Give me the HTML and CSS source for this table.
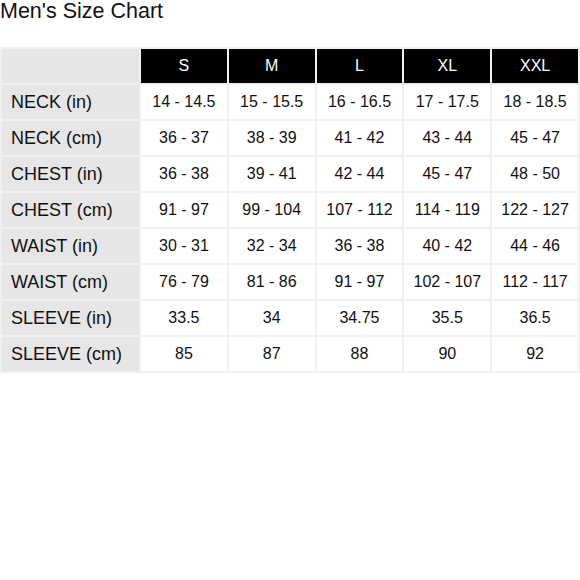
FILE: index.html
```html
<!DOCTYPE html>
<html>
<head>
<meta charset="utf-8">
<link rel="stylesheet" href="styles.css">
</head>
<body>
<h1 class="title">Men's Size Chart</h1>
<table class="chart">
  <thead>
    <tr><th class="corner"></th><th>S</th><th>M</th><th>L</th><th>XL</th><th>XXL</th></tr>
  </thead>
  <tbody>
    <tr><td class="label">NECK (in)</td><td>14 - 14.5</td><td>15 - 15.5</td><td>16 - 16.5</td><td>17 - 17.5</td><td>18 - 18.5</td></tr>
    <tr><td class="label">NECK (cm)</td><td>36 - 37</td><td>38 - 39</td><td>41 - 42</td><td>43 - 44</td><td>45 - 47</td></tr>
    <tr><td class="label">CHEST (in)</td><td>36 - 38</td><td>39 - 41</td><td>42 - 44</td><td>45 - 47</td><td>48 - 50</td></tr>
    <tr><td class="label">CHEST (cm)</td><td>91 - 97</td><td>99 - 104</td><td>107 - 112</td><td>114 - 119</td><td>122 - 127</td></tr>
    <tr><td class="label">WAIST (in)</td><td>30 - 31</td><td>32 - 34</td><td>36 - 38</td><td>40 - 42</td><td>44 - 46</td></tr>
    <tr><td class="label">WAIST (cm)</td><td>76 - 79</td><td>81 - 86</td><td>91 - 97</td><td>102 - 107</td><td>112 - 117</td></tr>
    <tr><td class="label">SLEEVE (in)</td><td>33.5</td><td>34</td><td>34.75</td><td>35.5</td><td>36.5</td></tr>
    <tr><td class="label">SLEEVE (cm)</td><td>85</td><td>87</td><td>88</td><td>90</td><td>92</td></tr>
  </tbody>
</table>
</body>
</html>
```
FILE: styles.css
```css
html, body {
  margin: 0;
  padding: 0;
  background: #fff;
}
body {
  font-family: "Liberation Sans", Arial, sans-serif;
  color: #111;
}
.title {
  font-size: 21.5px;
  font-weight: normal;
  line-height: 23px;
  margin: 0 0 24px 0;
}
.chart {
  width: 580px;
  border-collapse: collapse;
  table-layout: fixed;
}
.chart th, .chart td {
  border: 2px solid #f0f0f0;
  height: 34px;
  padding: 0;
  text-align: center;
  font-size: 16px;
  font-weight: normal;
}
.chart th {
  background: #000;
  color: #fff;
}
.chart th.corner {
  width: 137px;
  background: #e6e6e6;
}
.chart td.label {
  background: #e6e6e6;
  text-align: left;
  padding-left: 9px;
  font-size: 18px;
}
```
